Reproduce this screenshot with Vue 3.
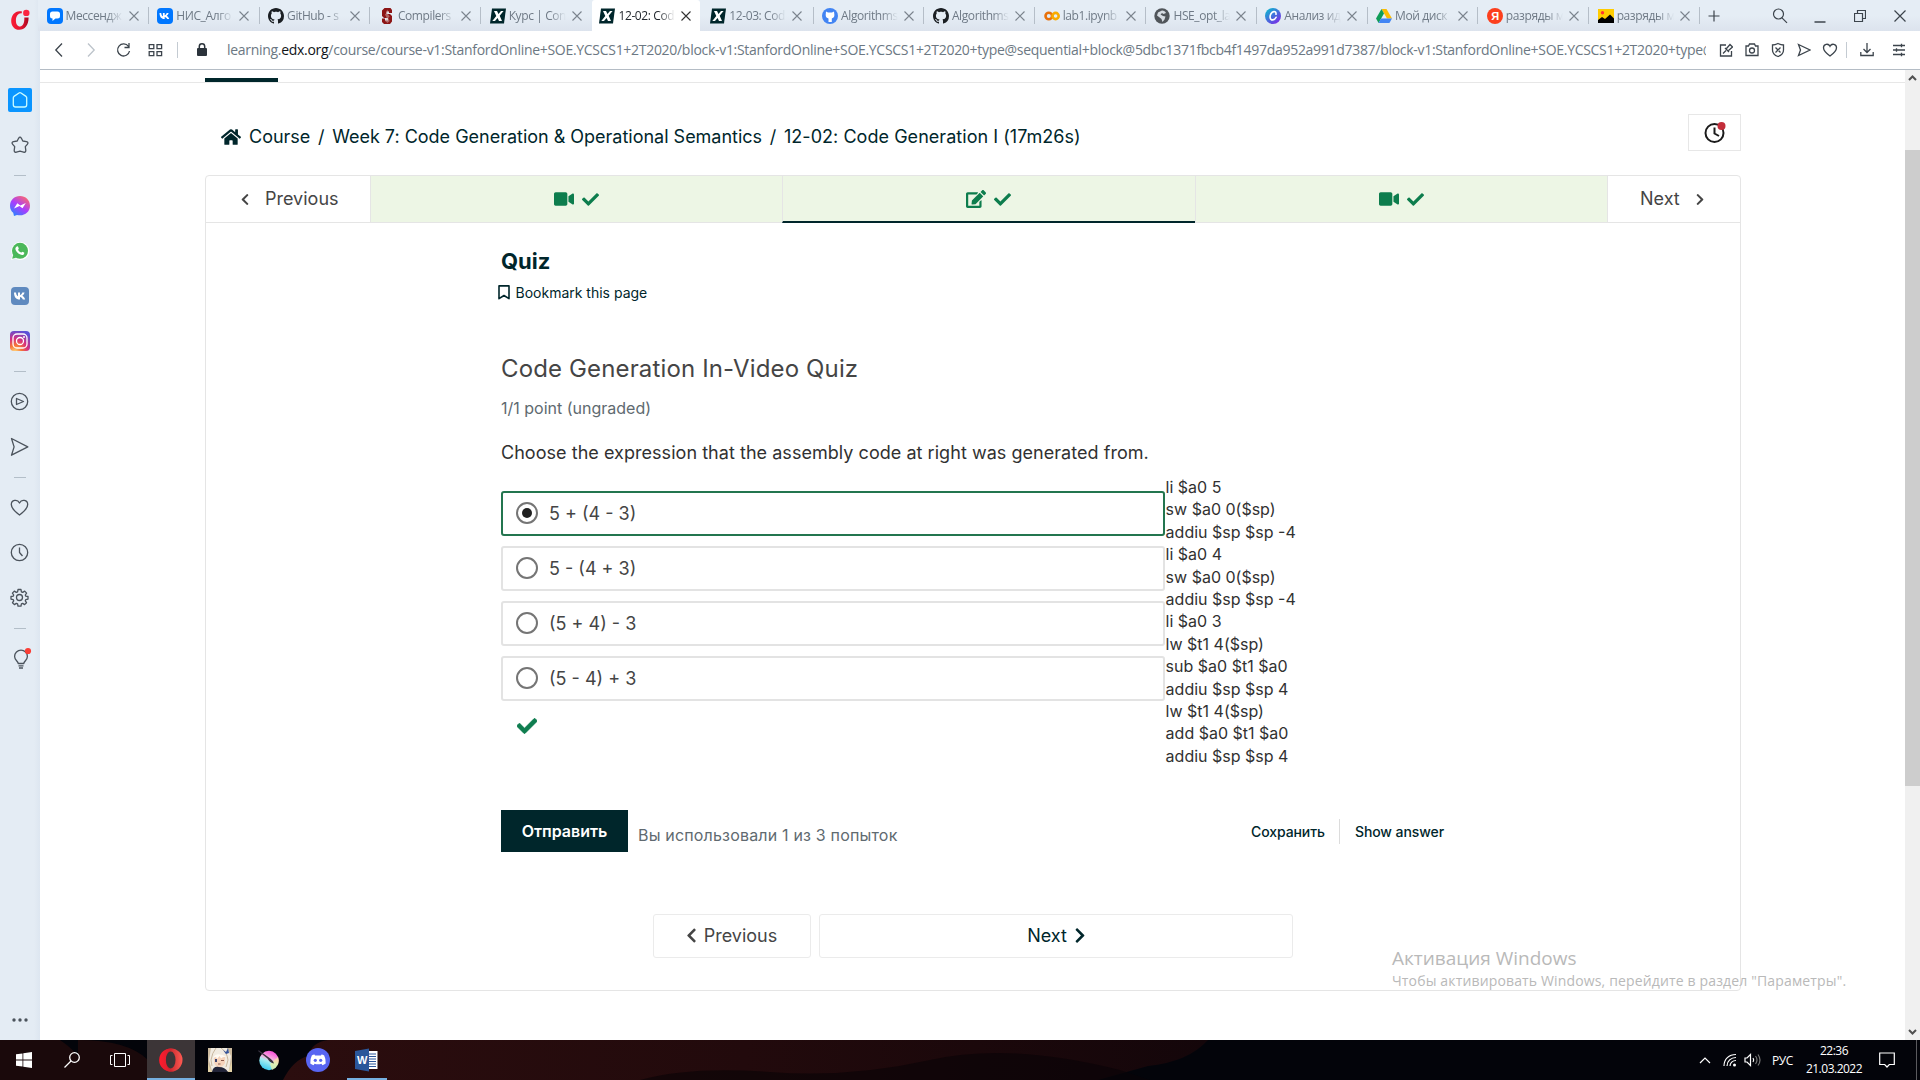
<script setup>
const tabs = [
  { icon: 'msg', title: 'Мессендж' },
  { icon: 'vk', title: 'НИС_Алго' },
  { icon: 'github', title: 'GitHub - s' },
  { icon: 'stanford', title: 'Compilers' },
  { icon: 'edx', title: 'Курс | Con' },
  { icon: 'edx', title: '12-02: Cod', active: true },
  { icon: 'edx', title: '12-03: Cod' },
  { icon: 'ghblue', title: 'Algorithms' },
  { icon: 'github', title: 'Algorithms' },
  { icon: 'colab', title: 'lab1.ipynb' },
  { icon: 'globe', title: 'HSE_opt_la' },
  { icon: 'canva', title: 'Анализ ид' },
  { icon: 'drive', title: 'Мой диск' },
  { icon: 'yandex', title: 'разряды м' },
  { icon: 'pic', title: 'разряды м' },
]
const side = ['home', 'star', '-', 'messenger', 'whatsapp', 'vk', 'instagram', '-', 'play', 'send', '-', 'heart', 'clock', 'gear', '-', 'bulb']
const options = ['5 + (4 - 3)', '5 - (4 + 3)', '(5 + 4) - 3', '(5 - 4) + 3']
const code = ['li $a0 5', 'sw $a0 0($sp)', 'addiu $sp $sp -4', 'li $a0 4', 'sw $a0 0($sp)', 'addiu $sp $sp -4', 'li $a0 3', 'lw $t1 4($sp)', 'sub $a0 $t1 $a0', 'addiu $sp $sp 4', 'lw $t1 4($sp)', 'add $a0 $t1 $a0', 'addiu $sp $sp 4']
const units = ['video', 'edit', 'video']
const urlTail = '/course/course-v1:StanfordOnline+SOE.YCSCS1+2T2020/block-v1:StanfordOnline+SOE.YCSCS1+2T2020+type@sequential+block@5dbc1371fbcb4f1497da952a991d7387/block-v1:StanfordOnline+SOE.YCSCS1+2T2020+type@'
const octocat = 'M8 0C3.58 0 0 3.58 0 8c0 3.54 2.29 6.53 5.47 7.59.4.07.55-.17.55-.38 0-.19-.01-.82-.01-1.49-2.01.37-2.53-.49-2.69-.94-.09-.23-.48-.94-.82-1.13-.28-.15-.68-.52-.01-.53.63-.01 1.08.58 1.23.82.72 1.21 1.87.87 2.33.66.07-.52.28-.87.51-1.07-1.78-.2-3.64-.89-3.64-3.95 0-.87.31-1.59.82-2.15-.08-.2-.36-1.02.08-2.12 0 0 .67-.21 2.2.82.64-.18 1.32-.27 2-.27s1.36.09 2 .27c1.53-1.04 2.2-.82 2.2-.82.44 1.1.16 1.92.08 2.12.51.56.82 1.27.82 2.15 0 3.07-1.87 3.75-3.65 3.95.29.25.54.73.54 1.48 0 1.07-.01 1.93-.01 2.2 0 .21.15.46.55.38A8.01 8.01 0 0 0 16 8c0-4.42-3.58-8-8-8z'
const checkPath = 'M173.9 439.4L7.5 273c-10-10-10-26.200 0-36.200l36.200-36.200c10-10 26.200-10 36.200 0L192 312.700 432.100 72.600c10-10 26.200-10 36.200 0l36.200 36.200c10 10 10 26.200 0 36.200L210.100 439.400c-10 10-26.200 10-36.200 0z'
const chevL = 'M34.520 239.030L228.870 44.690c9.370-9.370 24.570-9.370 33.940 0l22.670 22.670c9.360 9.360 9.370 24.520.040 33.900L131.490 256l154.020 154.750c9.340 9.380 9.320 24.540-.040 33.900l-22.670 22.670c-9.370 9.370-24.570 9.370-33.940 0L34.520 272.970c-9.370-9.370-9.370-24.570 0-33.940z'
const chevR = 'M285.476 272.971L91.132 467.314c-9.373 9.373-24.569 9.373-33.941 0l-22.667-22.667c-9.357-9.357-9.375-24.522-.040-33.901L188.505 256 34.484 101.255c-9.335-9.379-9.317-24.544.040-33.901l22.667-22.667c9.373-9.373 24.569-9.373 33.941 0L285.475 239.030c9.373 9.372 9.373 24.568.001 33.941z'
</script>

<template>
  <div class="screen">
    <div class="window">
      <aside class="sidebar">
        <svg class="opera" width="22" height="22" viewBox="0 0 22 22">
          <defs><linearGradient id="og" x1="0" x2="1"><stop offset="0" stop-color="#fb1b35" /><stop offset=".6" stop-color="#e0142f" /><stop offset="1" stop-color="#a8051f" /></linearGradient></defs>
          <path d="M13 2.600C7 .800 2.200 5.500 2.200 12c0 5.200 3.400 8.800 8 8.800 5.600 0 9.400-4.600 9.400-12.300l-4.300-.100c.300 5.500-1.500 9-4.200 9-2.700 0-4.200-2.500-4.200-6 0-4.500 2.700-7.500 5.700-7z" fill="url(#og)" />
          <circle cx="17.300" cy="3.900" r="3.200" fill="#fb2440" />
        </svg>
        <template v-for="(s, i) in side" :key="i">
          <div v-if="s === '-'" class="dash"><i></i></div>
          <div v-else class="side-item">
            <div v-if="s === 'home'" class="home">
              <svg width="24" height="24" viewBox="0 0 24 24" fill="none" stroke="#c9fbff" stroke-width="1.300" stroke-linejoin="round"><path d="M5.300 9.700Q5.300 9 6 8.400L11 5Q12 4.300 13 5l5 3.400q.700.600.700 1.300v7q0 2.300-2.300 2.300H7.600q-2.300 0-2.300-2.300z" /></svg>
            </div>
            <svg v-else-if="s === 'star'" width="20" height="20" viewBox="0 0 20 20" class="line"><path d="M8.600 3.300Q10 1 11.400 3.300L12.800 6l3.600.600q2.600.700.900 2.700l-2 2.400.500 3.600q.100 2.500-2.200 1.800L10 16.200l-3.600.900q-2.300.700-2.200-1.800l.5-3.600-2-2.400Q1 7.300 3.600 6.600L7.200 6z" /></svg>
            <svg v-else-if="s === 'messenger'" width="20" height="20" viewBox="0 0 20 20">
              <defs><linearGradient id="mg" x1=".1" y1="1" x2=".8" y2="0"><stop offset="0" stop-color="#1b8cff" /><stop offset=".5" stop-color="#a83dff" /><stop offset="1" stop-color="#ff6a68" /></linearGradient></defs>
              <path d="M10 0C4.400 0 0 4.100 0 9.700c0 3.200 1.200 5.400 3.200 7L4 20l3-1.100c1 .3 2 .4 3 .4 5.600 0 10-4.100 10-9.600S15.600 0 10 0z" fill="url(#mg)" /><path d="M4 12.500L7.300 7.300l3 2.300L15.800 7l-3.300 5.200-3-2.300z" fill="#fff" />
            </svg>
            <svg v-else-if="s === 'whatsapp'" width="20" height="20" viewBox="0 0 20 20">
              <path d="M1 19l1.400-4.700A9 9 0 1 1 5.500 17.600z" fill="#fff" /><circle cx="10" cy="9.800" r="8" fill="#4bb85a" /><path d="M2.200 17.800l1-4 3 3z" fill="#4bb85a" /><path d="M6.800 5.500c.5-.4 1-.3 1.300.300l.7 1.600c0 .5-.7 1-.7 1.400.6 1.300 1.600 2.200 3 2.800.4 0 .9-.9 1.300-.900l1.700.9c.4.300.1 1.400-.4 1.800-1.300.9-3 .6-5-.6-2-1.400-3.300-3.300-3.300-5 0-1 .6-1.800 1.400-2.300z" fill="#fff" />
            </svg>
            <svg v-else-if="s === 'vk'" width="18" height="18" viewBox="0 0 18 18"><rect width="18" height="18" rx="4" fill="#5f8abf" /><path d="M3 5.500h2c.2 2.200 1 3.400 2 3.800V5.500h2v2.600c1-.1 1.800-1.200 2.300-2.600h2.300c-.4 1.500-1.400 2.700-2.300 3.300 1 .5 2.200 1.700 2.900 3.700h-2.400c-.5-1.400-1.500-2.300-2.800-2.500v2.500H8.600C5 12.500 3.100 9.900 3 5.500z" fill="#fff" /></svg>
            <svg v-else-if="s === 'instagram'" width="20" height="20" viewBox="0 0 20 20">
              <defs><radialGradient id="ig" cx=".25" cy="1.050" r="1.100"><stop offset="0" stop-color="#ffdc80" /><stop offset=".3" stop-color="#f77737" /><stop offset=".6" stop-color="#d62f7f" /><stop offset="1" stop-color="#5b51d8" /></radialGradient></defs>
              <rect width="20" height="20" rx="4" fill="url(#ig)" /><g fill="none" stroke="#fff" stroke-width="1.300"><rect x="3" y="3" width="14" height="14" rx="4" /><circle cx="10" cy="10" r="3.500" /></g><circle cx="14" cy="6" r="1" fill="#fff" />
            </svg>
            <svg v-else-if="s === 'play'" width="20" height="20" viewBox="0 0 20 20" class="line"><circle cx="9.500" cy="9.500" r="8.200" /><path d="M6.500 6.500l7 3-7 3z" /></svg>
            <svg v-else-if="s === 'send'" width="20" height="20" viewBox="0 0 20 20" class="line"><path d="M1.500 1.500l16.300 8.400L1.500 18.200l2.600-8.300z" /></svg>
            <svg v-else-if="s === 'heart'" width="20" height="20" viewBox="0 0 20 20" class="line"><path d="M9.500 17C4 13 1.300 10.200 1.300 6.500c0-4.400 6-5.800 8.200-1.500 2.200-4.300 8.200-2.900 8.200 1.500 0 3.700-2.700 6.500-8.200 10.500z" /></svg>
            <svg v-else-if="s === 'clock'" width="20" height="20" viewBox="0 0 20 20" class="line"><circle cx="9.500" cy="9.500" r="8.200" /><path d="M9.500 4.500v5l3 3.500" /></svg>
            <svg v-else-if="s === 'gear'" width="20" height="20" viewBox="0 0 20 20" class="line"><circle cx="9.500" cy="9.500" r="3" /><path d="M8 1.500h3l.4 2.300 1.300.6 2-1.300 1.900 2-1.300 1.900.5 1.200 2.200.3v2.600l-2.200.5-.5 1.200 1.200 1.900-1.900 1.900-1.900-1.200-1.300.5-.4 2.300H8l-.4-2.300-1.300-.5-1.900 1.200-1.900-1.900 1.200-1.900-.5-1.200L1 11.100V8.500l2.200-.3.500-1.200-1.300-1.900 1.900-2 2 1.300 1.300-.6z" /></svg>
            <svg v-else width="24" height="24" viewBox="0 0 24 24" class="line bulb"><path d="M9.200 16.500c0-2-3.600-3.400-3.600-7a6.400 6.400 0 0 1 12.800 0c0 3.600-3.600 5-3.600 7zM9.500 18.800h5M10 21h4" /><circle cx="19" cy="4" r="3.100" fill="#fa3e35" stroke="none" /></svg>
          </div>
        </template>
        <svg class="dots" width="20" height="6" viewBox="0 0 20 6"><g fill="#4b535c"><circle cx="4" cy="3" r="1.700" /><circle cx="10" cy="3" r="1.700" /><circle cx="16" cy="3" r="1.700" /></g></svg>
      </aside>

      <div class="main">
        <div class="tabbar">
          <div v-for="(t, i) in tabs" :key="i" class="tab" :class="{ active: t.active, nosep: i === 4 }">
            <svg class="fav" width="16" height="16" viewBox="0 0 16 16">
              <template v-if="t.icon === 'msg'"><rect width="16" height="16" rx="4" fill="#07f" /><path d="M5.500 3.500h5a2.500 2.500 0 0 1 2.500 2.500v2a2.500 2.500 0 0 1-2.500 2.500H8.500L5.500 13v-2.500A2.500 2.500 0 0 1 3 8V6a2.500 2.500 0 0 1 2.500-2.500z" fill="#fff" /></template>
              <template v-else-if="t.icon === 'vk'"><rect width="16" height="16" rx="4" fill="#07f" /><path d="M2.500 5h1.700c.2 1.900.9 3 1.700 3.300V5h1.800v2.200c.8-.1 1.600-1.100 2-2.200h1.900c-.3 1.300-1.200 2.300-1.900 2.800.8.500 1.900 1.500 2.500 3.200h-2c-.5-1.200-1.300-2-2.500-2.100V11h-.5C4.200 11 2.600 8.800 2.500 5z" fill="#fff" /></template>
              <path v-else-if="t.icon === 'github'" :d="octocat" fill="#1b1f23" />
              <template v-else-if="t.icon === 'stanford'"><path d="M5.500 0h6L13 2v3H10V3.500H7.500V6H11l2 2v5.500L11 16H5l-2-2v-3.500h3v2h3V10H5L3 8V2.500z" fill="#8c1515" /><path d="M8 1.500l2 3-1.400 1 2 3-1.400 1.500 1.500 3-2.200 2-2.400-2 1.500-3.500L6 6.500 7.500 5z" fill="#d8b7b4" opacity=".5" /></template>
              <template v-else-if="t.icon === 'edx'"><path d="M2 .500h14L14 15.500H0z" fill="#00262b" /><path d="M4 3h3l1.500 3L11 3h2.600L9.700 7.800 12 13H9L7.600 9.900 5 13H2.300l4-5z" fill="#fff" /></template>
              <template v-else-if="t.icon === 'ghblue'"><circle cx="8" cy="8" r="8" fill="#4284f3" /><path d="M4 3.500l2 .9h4l2-.9.400 3.500c0 2.300-1.400 3.200-2.600 3.400V14H6.500v-3.600C5 10.200 3.700 9.300 3.700 7z" fill="#fff" /></template>
              <template v-else-if="t.icon === 'colab'"><circle cx="4.800" cy="8" r="3.300" fill="none" stroke="#e8710a" stroke-width="2.600" /><circle cx="11.600" cy="8" r="3.100" fill="none" stroke="#f9ab00" stroke-width="2.600" /></template>
              <template v-else-if="t.icon === 'globe'"><circle cx="8" cy="8" r="7.700" fill="#50555a" /><path d="M8 2.500c2 0 3.500 1 4 2.500L9.500 6 8 5 6.500 6.500 9 8l2.500.5-1 3-2 2.500-1-3L5 9 3 7.500 4 4.500z" fill="#d6dce2" /></template>
              <template v-else-if="t.icon === 'canva'"><defs><linearGradient id="cg" x1="0" y1="0" x2=".8" y2="1"><stop offset="0" stop-color="#00c4cc" /><stop offset="1" stop-color="#7d2ae8" /></linearGradient></defs><circle cx="8" cy="8" r="8" fill="url(#cg)" /><path d="M11 6.300c.3-2-.9-2.900-2.200-2.700C6.400 4 4.900 7 5.100 9.300c.2 1.700 1.200 2.800 2.700 2.600 1.400-.1 2.700-1.200 3.300-2.600" fill="none" stroke="#fff" stroke-width="1.600" stroke-linecap="round" /></template>
              <template v-else-if="t.icon === 'drive'"><path d="M5.500 1h5L16 10.500h-5z" fill="#fbbc04" /><path d="M5.500 1L0 10.500 2.600 15 8 5.500z" fill="#0f9d58" /><path d="M5 10.500h11L13.400 15H2.600z" fill="#4285f4" /></template>
              <template v-else-if="t.icon === 'yandex'"><circle cx="8" cy="8" r="8" fill="#fc3f1d" /><text x="4.200" y="12" class="ya">Я</text></template>
              <template v-else><rect y="1" width="16" height="14" fill="#fc0" /><path d="M0 15v-3l4-3 3 2 5-4.500 4 4V15z" /><circle cx="4.500" cy="4.800" r="1.700" fill="#f33" /></template>
            </svg>
            <span class="tab-title">{{ t.title }}</span>
            <svg class="tab-x" width="10" height="10" viewBox="0 0 10 10"><path d="M.5.500l9 9M9.500.500l-9 9" /></svg>
          </div>
          <svg class="plus" width="12" height="12" viewBox="0 0 12 12"><path d="M6 .500v11M.500 6h11" /></svg>
          <div class="win-controls">
            <svg width="16" height="16" viewBox="0 0 16 16"><circle cx="6.500" cy="6" r="5" /><path d="M10 9.800l5 5" /></svg>
            <svg width="12" height="16" viewBox="0 0 12 16"><path d="M.5 14h11" stroke-width="1.500" /></svg>
            <svg width="12" height="12" viewBox="0 0 12 12"><path d="M.5 3.500h8v8h-8zM3.500 3.500v-3h8v8h-3" /></svg>
            <svg width="12" height="12" viewBox="0 0 12 12"><path d="M.5.500l11 11M11.500.500l-11 11" /></svg>
          </div>
        </div>

        <div class="toolbar">
          <div class="nav-icons">
            <svg width="16" height="16" viewBox="0 0 16 16"><path d="M11 1.500L4.800 8l6.200 6.500" /></svg>
            <svg class="dim" width="16" height="16" viewBox="0 0 16 16"><path d="M5 1.500L11.200 8 5 14.500" /></svg>
            <svg width="16" height="16" viewBox="0 0 16 16"><path d="M13.500 4.500A6 6 0 1 0 14.500 9M14 1v4.500H9.500" /></svg>
            <svg width="16" height="16" viewBox="0 0 16 16"><path d="M2.200 2.700h4.600v4H2.200zM10 2.700h4.600v4H10zM2.200 9.700h4.600v4H2.200zM10 9.700h4.600v4H10z" /></svg>
          </div>
          <i class="vsep"></i>
          <svg class="lock" width="10" height="14" viewBox="0 0 10 14"><rect y="5" width="10" height="8" rx="1" fill="#2b333b" /><path d="M2.300 6V3.500a2.700 2.700 0 0 1 5.400 0V6" fill="none" stroke="#2b333b" stroke-width="1.500" /></svg>
          <div class="url">learning.<b>edx.org</b>{{ urlTail }}</div>
          <div class="tool-icons">
            <svg width="14" height="16" viewBox="0 0 14 16"><path d="M7 3H1.500v11h11V9M4 11.500L7 8.500M6 6l4 4M7.500 6.500L11 2.500l2.500 2.500-4 3.500" /></svg>
            <svg width="14" height="16" viewBox="0 0 14 16"><path d="M1 4h2.500L4.500 2h5l1 2H13v9.500H1z" /><circle cx="7" cy="8.500" r="2.500" /></svg>
            <svg width="14" height="16" viewBox="0 0 14 16"><path d="M7 1.500Q10 3 12.500 3v5c0 3.500-2.500 5.500-5.500 6.500C4 13.500 1.500 11.500 1.500 8V3Q4 3 7 1.500zM4.500 5.500l5 5M9.500 5.500l-5 5" /></svg>
            <svg width="14" height="16" viewBox="0 0 14 16"><path d="M1.500 2.500L13 8 1.500 13.500 3.500 8z" /></svg>
            <svg width="16" height="16" viewBox="0 0 16 16"><path d="M8 14C3.500 10.700 1.500 8.500 1.500 5.700 1.500 2 6.300 1 8 4.300 9.700 1 14.500 2 14.500 5.700 14.500 8.500 12.500 10.700 8 14z" /></svg>
          </div>
          <i class="vsep"></i>
          <svg class="dl" width="14" height="14" viewBox="0 0 14 14"><path d="M7 0v9M3.500 6L7 9.500 10.500 6M.800 9v3.500h12.400V9" /></svg>
          <svg class="sliders" width="14" height="14" viewBox="0 0 14 14"><path d="M1 2.500h12M1 7h12M1 11.500h12M9.500.800v3.400M4.500 5.300v3.400M9.500 9.800v3.400" /></svg>
        </div>

        <div class="viewport">
          <div class="page">
            <div class="course-tabs"><i></i></div>
            <div class="crumb-row">
              <div class="crumbs">
                <svg width="20" height="18" viewBox="0 32 576 448"><path fill="#00262b" d="M280.370 148.260L96 300.110V464a16 16 0 0 0 16 16l112.060-.290a16 16 0 0 0 15.920-16V368a16 16 0 0 1 16-16h64a16 16 0 0 1 16 16v95.640a16 16 0 0 0 16 16.050L464 480a16 16 0 0 0 16-16V300L295.670 148.260a12.190 12.190 0 0 0-15.300 0zM571.600 251.470L488 182.560V44.050a12 12 0 0 0-12-12h-56a12 12 0 0 0-12 12v72.610L318.470 43a48 48 0 0 0-61 0L4.340 251.470a12 12 0 0 0-1.600 16.900l25.500 31A12 12 0 0 0 45.150 301l235.220-193.740a12.190 12.190 0 0 1 15.300 0L530.900 301a12 12 0 0 0 16.900-1.600l25.500-31a12 12 0 0 0-1.700-16.930z" /></svg>
                <span>Course</span><em>/</em><span>Week 7: Code Generation &amp; Operational Semantics</span><em>/</em><span class="last">12-02: Code Generation I (17m26s)</span>
              </div>
              <button class="timer"><svg width="24" height="24" viewBox="0 0 24 24" fill="none" stroke="#1b1b1b" stroke-width="2"><circle cx="11.500" cy="12" r="9" /><path d="M11.500 6.500v6l4.500 2.500" /><circle cx="18.500" cy="5" r="4" fill="#c32d3a" stroke="none" /></svg></button>
            </div>

            <div class="sequence">
              <div class="seq-nav">
                <div class="seq-prev"><svg width="10" height="13" viewBox="0 0 320 512"><path :d="chevL" fill="#454545" /></svg><span>Previous</span></div>
                <div v-for="(u, i) in units" :key="i" class="unit" :class="{ current: i === 1 }">
                  <svg v-if="u === 'video'" width="20" height="18" viewBox="0 0 576 512"><path fill="#0d7d4d" d="M336.200 64H47.800C21.400 64 0 85.400 0 111.800v288.400C0 426.600 21.400 448 47.800 448h288.400c26.400 0 47.800-21.400 47.800-47.800V111.800c0-26.400-21.400-47.800-47.800-47.800zm189.400 37.700L416 177.300v157.400l109.600 75.500c21.200 14.600 50.400-.3 50.400-25.800V127.500c0-25.400-29.100-40.400-50.400-25.800z" /></svg>
                  <svg v-else width="20" height="18" viewBox="0 0 576 512"><path fill="#0d7d4d" d="M402.600 83.200l90.200 90.200c3.800 3.800 3.800 10 0 13.800L274.400 405.600l-92.800 10.300c-12.400 1.400-22.900-9.100-21.500-21.500l10.300-92.800L388.800 83.200c3.800-3.800 10-3.800 13.800 0zm162-22.900l-48.800-48.800c-15.200-15.200-39.900-15.200-55.200 0l-35.400 35.400c-3.800 3.800-3.800 10 0 13.800l90.200 90.200c3.800 3.800 10 3.800 13.800 0l35.400-35.400c15.200-15.300 15.200-40 0-55.200zM384 346.200V448H64V128h229.800c3.200 0 6.200-1.300 8.500-3.500l40-40c7.600-7.600 2.200-20.500-8.500-20.500H48C21.500 64 0 85.500 0 112v352c0 26.500 21.500 48 48 48h352c26.500 0 48-21.500 48-48V306.200c0-10.700-12.900-16-20.500-8.500l-40 40c-2.200 2.300-3.500 5.300-3.500 8.500z" /></svg>
                  <svg width="17" height="17" viewBox="0 0 512 512"><path :d="checkPath" fill="#0d7d4d" /></svg>
                </div>
                <div class="seq-next"><span>Next</span><svg width="10" height="13" viewBox="0 0 320 512"><path :d="chevR" fill="#454545" /></svg></div>
              </div>

              <div class="content">
                <h1>Quiz</h1>
                <div class="bookmark"><svg width="12" height="15" viewBox="0 0 12 15"><path d="M1 .900h10v12.800L6 10.500l-5 3.200z" fill="none" stroke="#00262b" stroke-width="1.600" stroke-linejoin="round" /></svg><span>Bookmark this page</span></div>
                <h2>Code Generation In-Video Quiz</h2>
                <div class="points">1/1 point (ungraded)</div>
                <p class="question">Choose the expression that the assembly code at right was generated from.</p>
                <div class="problem">
                  <div class="choices">
                    <div v-for="(o, i) in options" :key="i" class="choice" :class="{ right: i === 0 }">
                      <i class="radio"></i><span>{{ o }}</span>
                    </div>
                    <svg class="ok" width="20" height="20" viewBox="0 0 512 512"><path :d="checkPath" fill="#0f7d4f" stroke="#0f7d4f" stroke-width="22" /></svg>
                  </div>
                  <div class="asm"><div v-for="(c, i) in code" :key="i">{{ c }}</div></div>
                </div>
                <div class="actions">
                  <button class="submit">Отправить</button>
                  <span class="attempts">Вы использовали 1 из 3 попыток</span>
                  <span class="save">Сохранить</span><i></i><span class="show">Show answer</span>
                </div>
                <div class="unit-nav">
                  <button class="up"><svg width="9" height="15" viewBox="20 32 280 448"><path :d="chevL" fill="#454545" /></svg>Previous</button>
                  <button class="un">Next<svg width="10" height="15" viewBox="20 32 280 448"><path :d="chevR" fill="#00262b" /></svg></button>
                </div>
              </div>
            </div>
          </div>
          <div class="scrollbar">
            <svg width="9" height="6" viewBox="0 0 9 6"><path d="M1 5l3.500-3.500L8 5" /></svg>
            <div class="thumb"></div>
            <svg class="down" width="9" height="6" viewBox="0 0 9 6"><path d="M1 1l3.500 3.500L8 1" /></svg>
          </div>
        </div>
      </div>
    </div>

    <div class="watermark"><div class="w1">Активация Windows</div><div class="w2">Чтобы активировать Windows, перейдите в раздел "Параметры".</div></div>

    <div class="taskbar">
      <svg class="wall" width="1920" height="40" viewBox="0 0 1920 40" preserveAspectRatio="none">
        <defs><linearGradient id="wg" x1="0" x2="1"><stop offset="0" stop-color="#2b0d0e" /><stop offset=".5" stop-color="#220a0c" /><stop offset="1" stop-color="#14060a" /></linearGradient></defs>
        <path d="M0 0h60q30 20 20 40H0zM78 0q50 0 70 20v20H78z" fill="#1a090b" />
        <path d="M283 40q10-20 25-24 4-14 20-16h880q-20 22-60 26l-50 14z" fill="url(#wg)" />
        <path d="M640 40q50-14 130-8t160-12 190 10l30 10z" fill="#080306" opacity=".6" />
      </svg>
      <div class="tb"><svg width="16" height="16" viewBox="0 0 16 16" fill="#fff"><path d="M0 2.300l6.500-.9v6.200H0zM7.300 1.300L16 0v7.600H7.300zM0 8.400h6.500v6.200L0 13.700zM7.300 8.400H16V16l-8.700-1.300z" /></svg></div>
      <div class="tb"><svg width="16" height="16" viewBox="0 0 16 16" fill="none" stroke="#fff" stroke-width="1.300"><circle cx="10.500" cy="5.500" r="4.800" /><path d="M7 9L.500 15.500" /></svg></div>
      <div class="tb"><svg width="20" height="14" viewBox="0 0 20 14" fill="none" stroke="#fff"><path d="M4.500.500h11v13h-11zM2.500 2.500h-2v9h2M17.500 2.500h2v9h-2" /></svg></div>
      <div class="tb on"><svg width="24" height="24" viewBox="0 0 24 24"><defs><linearGradient id="o1" x1="0" x2="1"><stop offset="0" stop-color="#ff1b2d" /><stop offset="1" stop-color="#c8222f" /></linearGradient><linearGradient id="o2" x1="0" x2="1"><stop offset="0" stop-color="#9c0010" /><stop offset="1" stop-color="#ff5a52" /></linearGradient></defs><circle cx="12" cy="12" r="11.500" fill="url(#o2)" /><path d="M15 1a11.500 11.500 0 1 0 0 22C10 23 7 18.500 7 12S10 1 15 1z" fill="url(#o1)" /><ellipse cx="11.700" cy="12" rx="4.800" ry="8.500" fill="#3c3537" /></svg></div>
      <div class="tb w49"><svg width="24" height="24" viewBox="0 0 24 24">
        <rect width="24" height="24" fill="#cdbb9f" /><path d="M3 0h16l4 8-2 15H4L1 12z" fill="#f1ebe1" /><path d="M6 9q5-3 11 0v6q-2 4-6 4t-5-5z" fill="#f6d3bb" /><path d="M5 10Q8 3 19 9q-4-1-6 1.500L11.500 8 9 11 8 9z" fill="#fffaf2" /><path d="M8 0q-4 5-5 12l1 6M13 0q6 4 7 12l-2 7" stroke="#c9b79f" fill="none" /><rect x="7" y="11" width="2" height="3" fill="#3d4470" /><path d="M13 12.500h3M10 16h2.500" stroke="#8c5a4c" /><path d="M4 24q1-6 7-5 6 0 9 5z" fill="#222438" /><path d="M15 2l3 2 2-4 1 5-3 1z" fill="#35549b" /><path d="M0 16l4 8H0zM24 14v10h-4z" fill="#e3d3a8" />
      </svg></div>
      <div class="tb w49"><svg width="22" height="22" viewBox="0 0 22 22"><defs><linearGradient id="k" x1=".7" y1="0" x2=".3" y2="1"><stop offset="0" stop-color="#f846d8" /><stop offset=".4" stop-color="#f8b0e0" /><stop offset=".55" stop-color="#a8eef0" /><stop offset="1" stop-color="#30c8f0" /></linearGradient></defs><circle cx="11" cy="11.500" r="9.700" fill="url(#k)" /><path d="M20 8a9.700 9.700 0 0 1-6 13l-2-6z" fill="#f4ef9a" opacity=".7" /><path d="M0 2l.8-.8 9.700 7q4.500 2.800 5.500 6.300-4-.5-6.500-5z" fill="#3a3340" /></svg></div>
      <div class="tb w49"><svg width="24" height="24" viewBox="0 0 24 24"><circle cx="12" cy="12" r="12" fill="#5865f2" /><path d="M8.500 6.500q-1.500.200-2.700.900Q4 11 4.300 15.600q1.600 1.200 3.300 1.700l.9-1.500q3.500 1 7 0l.9 1.500q1.700-.5 3.300-1.700.300-4.600-1.500-8.200-1.200-.7-2.700-.9l-.5.900h-6z" fill="#fff" /><circle cx="9.300" cy="12.300" r="1.600" fill="#5865f2" /><circle cx="14.700" cy="12.300" r="1.600" fill="#5865f2" /></svg></div>
      <div class="tb w49 word"><svg width="24" height="24" viewBox="0 0 24 24"><path d="M12 3h10.500v18H12z" fill="#fff" /><path d="M14 6h7M14 8.500h7M14 11h7M14 13.500h7M14 16h7M14 18.500h7" stroke="#2b579a" /><path d="M0 3l14-2.500v23L0 21z" fill="#2b579a" /><text x="2" y="16" class="ww">W</text></svg></div>

      <div class="tray">
        <svg class="t1" width="12" height="8" viewBox="0 0 12 8"><path d="M1 7l5-5 5 5" /></svg>
        <svg class="t2" width="14" height="14" viewBox="0 0 14 14"><path d="M1 13C1 6 6 1.500 13 1.500M4 13c0-5 4-8.500 9-8.500M7 13c0-3 2.500-5.500 6-5.500" /><circle cx="11.500" cy="12" r="1.500" fill="#fff" stroke="none" /></svg>
        <svg class="t3" width="17" height="14" viewBox="0 0 17 14"><path d="M1 5h2l3.500-3.500v11L3 9H1zM9 5q1.500 2 0 4" /><path d="M11.500 3q3 4 0 8M14 1.500q4 5.500 0 11" stroke="#777" /></svg>
        <span class="lang">РУС</span>
        <div class="clock"><div>22:36</div><div>21.03.2022</div></div>
        <svg class="t4" width="16" height="17" viewBox="0 0 16 17"><path d="M.700 1h14.600v11.500h-5L8 15l-2.300-2.500h-5z" /></svg>
        <i class="peek"></i>
      </div>
    </div>
  </div>
</template>

<style>
body { margin: 0; overflow: hidden; }
</style>

<style scoped>
* { box-sizing: border-box; }
svg { display: block; flex: none; }
button { margin: 0; padding: 0; background: #fff; font: inherit; color: inherit; }
.screen { position: relative; width: 1920px; height: 1080px; overflow: hidden; background: #fff; font-family: Inter, sans-serif; display: flex; flex-direction: column; }
.window { display: flex; height: 1040px; background: #e4ecf4; }
.sidebar { width: 40px; flex: none; display: flex; flex-direction: column; align-items: center; padding-top: 9px; background: linear-gradient(90deg, #e4ecf4 34px, #dde6f0 40px); }
.opera { margin-bottom: 46.500px; }
.side-item { height: 45px; display: flex; align-items: center; justify-content: center; }
.home { width: 24px; height: 24px; border-radius: 2px; background: #0a95ff; }
.line { fill: none; stroke: #4b535c; stroke-width: 1.300; stroke-linejoin: round; }
.bulb { margin-left: 1px; }
.dash { height: 16px; display: flex; align-items: center; }
.dash i { width: 12px; height: 1px; background: #b3bec8; }
.dots { margin-top: auto; margin-bottom: 17px; }
.main { flex: 1; min-width: 0; display: flex; flex-direction: column; }

.tabbar { height: 31px; flex: none; display: flex; align-items: center; background: linear-gradient(#e5edf5 50%, #dce3ed); margin-left: -2px; font-family: "Open Sans", sans-serif; }
.tab { width: 110.800px; height: 31px; flex: none; display: flex; align-items: center; position: relative; padding-left: 8.500px; }
.tab::after { content: ""; position: absolute; right: 0; top: 7px; width: 1px; height: 17px; background: #b5bec8; }
.tab.active::after, .tab.nosep::after { display: none; }
.tab.active { background: #fff; width: 108px; margin-right: 2.800px; padding-left: 7.500px; border-radius: 3px 3px 0 0; }
.tab.active + .tab { padding-left: 7.500px; }
.tab-title { width: 62px; margin-left: 3px; white-space: nowrap; font-size: 12px; letter-spacing: -.4px; line-height: 18px; color: #6f7a86; -webkit-mask-image: linear-gradient(90deg, #000 66%, transparent 92%); mask-image: linear-gradient(90deg, #000 66%, transparent 92%); }
.active .tab-title { color: #23282e; }
.tab-x { margin-left: 1px; fill: none; stroke: #7b848d; stroke-width: 1.100; }
.active .tab-x { stroke: #333; }
.plus { margin-left: 8px; fill: none; stroke: #3c444c; stroke-width: 1.200; }
.win-controls { margin-left: auto; margin-right: 14px; display: flex; align-items: center; fill: none; stroke: #3c444c; stroke-width: 1.200; }
.win-controls svg:nth-child(2) { margin-left: 26px; }
.win-controls svg:nth-child(3) { margin-left: 28px; }
.win-controls svg:nth-child(4) { margin-left: 28px; }
.ya { font: 700 11px "Liberation Sans", sans-serif; fill: #fff; }

.toolbar { height: 39px; flex: none; background: #fff; border-bottom: 1px solid #b4bcc5; display: flex; align-items: center; padding-left: 11px; fill: none; stroke: #3c444c; stroke-width: 1.300; }
.nav-icons { display: flex; gap: 16px; }
.dim { stroke: #bcc3ca; }
.vsep { width: 1px; height: 16px; background: #c4cbd2; }
.nav-icons + .vsep { margin-left: 14px; }
.lock { margin-left: 19px; stroke: none; }
.url { width: 1479px; margin-left: 20px; overflow: hidden; white-space: nowrap; font: 14px/20px "Open Sans", sans-serif; letter-spacing: -.295px; color: #6c7883; }
.url b { font-weight: 400; color: #101418; }
.tool-icons { display: flex; gap: 12px; margin-left: 13px; }
.tool-icons svg:last-child { margin-left: -1px; }
.tool-icons + .vsep { margin-left: 8px; }
.dl { margin-left: 13px; }
.sliders { margin-left: 18px; }

.viewport { flex: 1; display: flex; background: #fff; }
.page { flex: 1; min-width: 0; }
.scrollbar { width: 15px; background: #f0f0f0; display: flex; flex-direction: column; align-items: center; padding: 5px 0 5px; }
.scrollbar svg { fill: none; stroke: #505050; stroke-width: 2; }
.thumb { width: 15px; height: 636px; margin-top: 69px; background: #cdcdcd; }
.down { margin-top: auto; }
.course-tabs { height: 13px; border-bottom: 1px solid #e7e7e7; padding: 8px 0 0 165px; }
.course-tabs i { display: block; width: 73px; height: 4px; background: #00262b; }
.crumb-row { display: flex; align-items: center; justify-content: space-between; width: 1536px; height: 36px; margin: 32px 0 0 165px; padding-left: 16px; }
.crumbs { display: flex; align-items: center; height: 26px; margin-top: 7px; font-size: 18px; line-height: 26px; color: #00262b; white-space: nowrap; }
.crumbs span { letter-spacing: -.01px; }
.crumbs .last { letter-spacing: .04px; }
.crumbs svg { margin-right: 8px; }
.crumbs em { font-style: normal; margin: 0 7.700px; }
.timer { width: 53px; height: 37px; margin-top: -1px; border: 1px solid #e7e7e7; display: flex; align-items: center; justify-content: center; }

.sequence { width: 1536px; height: 816px; margin: 24px 0 0 165px; border: 1px solid #e5e5e5; border-radius: 4px; }
.seq-nav { display: flex; height: 47px; border-bottom: 1px solid #e5e5e5; font-size: 18px; color: #454545; }
.seq-nav > div { display: flex; align-items: center; }
.seq-prev { width: 164px; padding-left: 34px; }
.seq-nav span { margin-top: -2px; }
.seq-prev span { margin-left: 15px; }
.unit { flex: 1; justify-content: center; gap: 8px; height: 46px; background: #edf6e5; border-left: 1px solid #e5e5e5; }
.unit.current { height: 47px; border-bottom: 2px solid #00262b; padding-top: 1px; }
.seq-next { width: 133px; border-left: 1px solid #e5e5e5; padding-left: 32px; }
.seq-next svg { margin-left: 15px; }

.content { width: 944px; margin-left: 295px; }
h1 { margin: 24px 0 0; font-size: 22px; line-height: 28px; font-weight: 700; color: #00262b; }
.bookmark { display: flex; align-items: center; height: 20px; margin: 7px 0 0 -3.500px; font-size: 14px; color: #00262b; }
.bookmark span { margin-left: 6px; }
h2 { margin: 51px 0 0; font-size: 24px; line-height: 32px; font-weight: 400; letter-spacing: .14px; color: #454545; white-space: nowrap; }
.points { margin-top: 11px; font-size: 16px; line-height: 24px; color: #606a70; }
.question { margin: 19px 0 0; font-size: 18px; line-height: 28px; letter-spacing: .04px; color: #313131; white-space: nowrap; }
.problem { display: flex; margin-top: 9px; }
.choices { width: 664px; padding-top: 15px; }
.choice { height: 45px; margin-bottom: 10px; border: 2px solid #e3e3e3; border-radius: 3px; display: flex; align-items: center; padding-left: 13px; font-size: 18px; color: #454545; }
.choice span { margin-left: 11px; }
.choice.right { border-color: #23754f; }
.radio { width: 22px; height: 22px; margin-bottom: 1px; border: 2px solid #757575; border-radius: 50%; display: flex; align-items: center; justify-content: center; }
.right .radio::after { content: ""; width: 10px; height: 10px; border-radius: 50%; background: #202020; }
.ok { margin: 15px 0 0 16px; }
.asm { font-size: 16px; line-height: 22.400px; color: #313131; white-space: nowrap; padding-left: .6px; }
.actions { display: flex; align-items: center; height: 42px; margin-top: 42.800px; font-size: 14px; color: #00262b; white-space: nowrap; }
.submit { width: 127px; height: 42px; border: 0; background: #00262b; color: #fff; font-size: 16px; font-weight: 600; }
.attempts { margin: 8px 0 0 10px; font-size: 16px; letter-spacing: .18px; color: #606a70; }
.save { margin-left: auto; }
.show { margin-right: 1px; }
.save, .show { font-weight: 500; letter-spacing: -.08px; }
.actions i { width: 1px; height: 25px; margin: 0 15px 0 14px; background: #dcdcdc; }
.unit-nav { display: flex; gap: 8px; margin: 62px 0 0 152px; font-size: 18px; }
.unit-nav button { height: 44px; border: 1px solid #ebebeb; border-radius: 3px; display: flex; align-items: center; justify-content: center; padding-bottom: 1px; }
.up { width: 158px; gap: 8px; color: #454545; }
.un { width: 474px; gap: 8px; color: #00262b; }

.watermark { position: absolute; left: 1392px; top: 944px; color: #b9b9b9; font-family: "Open Sans", sans-serif; white-space: nowrap; }
.w1 { font-size: 19px; line-height: 28px; }
.w2 { font-size: 14px; line-height: 18px; letter-spacing: .15px; }

.taskbar { position: relative; height: 40px; background: #03040a; display: flex; font-family: "Open Sans", sans-serif; }
.wall { position: absolute; left: 0; top: 0; }
.tb { position: relative; width: 48px; height: 40px; display: flex; align-items: center; justify-content: center; }
.w49 { width: 49px; }
.on { margin-left: 3px; background: #3c3537; }
.on::after, .word::after { content: ""; position: absolute; left: 0; right: 0; bottom: 0; height: 2px; background: #76b0e0; }
.word::after { left: 5px; right: 4px; }
.ww { font: 700 11px "Liberation Sans", sans-serif; fill: #fff; }
.tray { position: relative; margin-left: auto; display: flex; align-items: center; color: #fff; font-size: 12px; fill: none; stroke: #fff; stroke-width: 1.200; }
.t2 { margin-left: 12px; }
.t3 { margin-left: 7px; }
.lang { margin-left: 11px; letter-spacing: -.4px; }
.clock { width: 60px; margin-left: 11px; text-align: center; line-height: 18px; letter-spacing: -.5px; }
.t4 { margin: 0 1px 0 15px; }
.peek { width: 1px; height: 40px; margin: 0 3px 0 20px; background: #5a5a5e; }
</style>
